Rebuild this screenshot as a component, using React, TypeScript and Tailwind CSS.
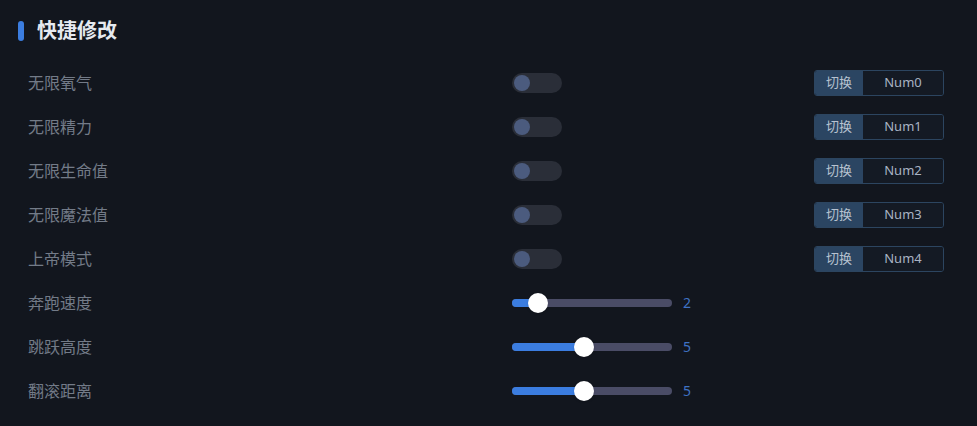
import React from 'react'

interface ToggleRow {
  label: string
  hotkey: string
}

interface SliderRow {
  label: string
  value: number
}

const toggles: ToggleRow[] = [
  { label: '无限氧气', hotkey: 'Num0' },
  { label: '无限精力', hotkey: 'Num1' },
  { label: '无限生命值', hotkey: 'Num2' },
  { label: '无限魔法值', hotkey: 'Num3' },
  { label: '上帝模式', hotkey: 'Num4' },
]

const sliders: SliderRow[] = [
  { label: '奔跑速度', value: 2 },
  { label: '跳跃高度', value: 5 },
  { label: '翻滚距离', value: 5 },
]

const MIN = 1
const MAX = 10

function Switch() {
  return (
    <div className="relative h-5 w-[50px] rounded-full bg-[#2a2e38]">
      <div className="absolute left-[2px] top-[2px] h-4 w-4 rounded-full bg-[#4b5b7e]" />
    </div>
  )
}

function Slider({ value }: { value: number }) {
  // thumb travels over track width minus its own diameter
  const center = 10 + (140 * (value - MIN)) / (MAX - MIN)
  return (
    <div className="flex items-center gap-[11px]">
      <div className="relative h-2 w-[160px] rounded-full bg-[#4a4c66]">
        <div className="absolute left-0 top-0 h-2 rounded-full bg-[#3b7de0]" style={{ width: center }} />
        <div
          className="absolute top-1/2 h-5 w-5 -translate-y-1/2 rounded-full bg-white shadow"
          style={{ left: center - 10 }}
        />
      </div>
      <span className="text-sm text-[#3f72c4]">{value}</span>
    </div>
  )
}

function Hotkey({ keyName }: { keyName: string }) {
  return (
    <div className="flex h-[26px] w-[130px] overflow-hidden rounded-[3px] border border-[#2c4560] text-[13px]">
      <div className="flex w-[48px] items-center justify-center bg-[#2b4562] text-[#b7c2d0]">切换</div>
      <div className="flex flex-1 items-center justify-center bg-[#141a24] text-[#a9b3c3]">{keyName}</div>
    </div>
  )
}

export default function App() {
  return (
    <div
      className="h-[426px] w-[977px] overflow-hidden bg-[#12161e] pl-[18px] pr-[33px]"
      style={{ fontFamily: '"Noto Sans", "Noto Sans CJK SC", sans-serif' }}
    >
      <div className="flex h-[61px] items-center gap-[13px] pt-[1px]">
        <div className="h-5 w-[6px] rounded-full bg-[#3b7de0]" />
        <h2 className="text-[20px] font-bold text-[#e6eaf0]">快捷修改</h2>
      </div>
      <div className="pl-[10px]">
        {toggles.map((t) => (
          <div key={t.label} className="flex h-[44px] items-center">
            <span className="w-[484px] text-[16px] text-[#737b88]">{t.label}</span>
            <div className="flex-1">
              <Switch />
            </div>
            <Hotkey keyName={t.hotkey} />
          </div>
        ))}
        {sliders.map((s) => (
          <div key={s.label} className="flex h-[44px] items-center">
            <span className="w-[484px] text-[16px] text-[#737b88]">{s.label}</span>
            <Slider value={s.value} />
          </div>
        ))}
      </div>
    </div>
  )
}
